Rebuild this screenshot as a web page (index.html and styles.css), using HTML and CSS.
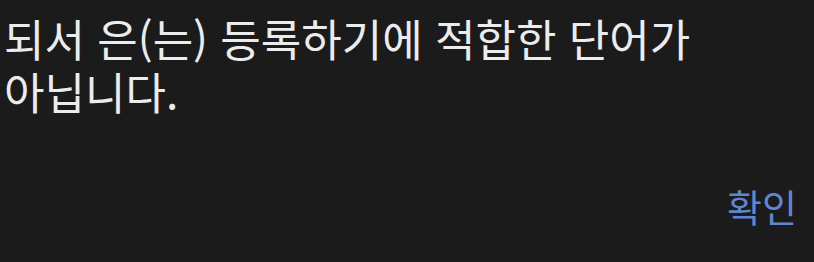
FILE: index.html
```html
<!DOCTYPE html>
<html lang="ko">
<head>
    <meta charset="UTF-8" />
    <meta name="viewport" content="width=device-width, initial-scale=1.0" />
    <title>알림</title>
    <link rel="stylesheet" href="styles.css">
</head>
<body>
    <div class="dialog">
        <p class="message">되서 은(는) 등록하기에 적합한 단어가 아닙니다.</p>
        <div class="actions">
            <button type="button" class="ok-btn">확인</button>
        </div>
    </div>
</body>
</html>
```

FILE: styles.css
```css
/* Dialog */
body {
    margin: 0;
    background-color: #1b1b1b;
    font-family: 'Noto Sans CJK KR', 'Noto Sans', sans-serif;
}

.dialog {
    width: 814px;
    height: 262px;
    box-sizing: border-box;
    padding: 12px 17px 0 4px;
    display: flex;
    flex-direction: column;
}

.message {
    margin: 0;
    color: #ececec;
    font-size: 44px;
    font-weight: 400;
    line-height: 53px;
    width: 740px;
    word-break: keep-all;
}

.actions {
    display: flex;
    justify-content: flex-end;
    margin-top: 63px;
}

.ok-btn {
    background: none;
    border: none;
    padding: 0;
    color: #5f86cf;
    font-family: inherit;
    font-size: 38px;
    line-height: 50px;
    cursor: pointer;
}
```
